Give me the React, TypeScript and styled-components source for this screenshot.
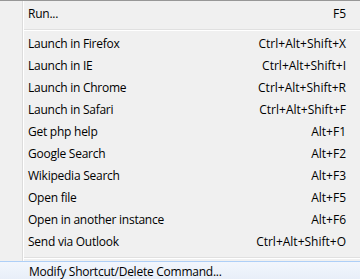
import React from 'react'
import styled, { createGlobalStyle } from 'styled-components'

const GlobalStyle = createGlobalStyle`
  html, body {
    margin: 0;
    padding: 0;
    background: #f0f0f0;
  }
  body {
    font-family: 'Open Sans', 'Noto Sans', sans-serif;
    font-size: 12px;
    color: #000;
  }
`

type Entry =
  | { kind: 'item'; label: string; shortcut?: string; highlighted?: boolean }
  | { kind: 'separator' }

const entries: Entry[] = [
  { kind: 'item', label: 'Run...', shortcut: 'F5' },
  { kind: 'separator' },
  { kind: 'item', label: 'Launch in Firefox', shortcut: 'Ctrl+Alt+Shift+X' },
  { kind: 'item', label: 'Launch in IE', shortcut: 'Ctrl+Alt+Shift+I' },
  { kind: 'item', label: 'Launch in Chrome', shortcut: 'Ctrl+Alt+Shift+R' },
  { kind: 'item', label: 'Launch in Safari', shortcut: 'Ctrl+Alt+Shift+F' },
  { kind: 'item', label: 'Get php help', shortcut: 'Alt+F1' },
  { kind: 'item', label: 'Google Search', shortcut: 'Alt+F2' },
  { kind: 'item', label: 'Wikipedia Search', shortcut: 'Alt+F3' },
  { kind: 'item', label: 'Open file', shortcut: 'Alt+F5' },
  { kind: 'item', label: 'Open in another instance', shortcut: 'Alt+F6' },
  { kind: 'item', label: 'Send via Outlook', shortcut: 'Ctrl+Alt+Shift+O' },
  { kind: 'separator' },
  { kind: 'item', label: 'Modify Shortcut/Delete Command...', highlighted: true }
]

const Menu = styled.div`
  position: relative;
  width: 360px;
  height: 279px;
  overflow: hidden;
  box-sizing: border-box;
  border-top: 1px solid #979797;
  padding-top: 2px;
  background: #f0f0f0;

  /* icon gutter edge */
  &::before {
    content: '';
    position: absolute;
    top: 0;
    bottom: 0;
    left: 22px;
    width: 1px;
    background: #dcdcdc;
    border-right: 1px solid #ffffff;
  }
`

const Row = styled.div<{ $highlighted?: boolean }>`
  position: relative;
  z-index: 1;
  display: flex;
  align-items: center;
  justify-content: space-between;
  height: 22px;
  box-sizing: border-box;
  padding: 0 14px 0 28px;
  line-height: 22px;
  white-space: nowrap;
  ${p =>
    p.$highlighted &&
    `
    margin: 0 -3px;
    padding-left: 31px;
    border: 1px solid #aecff7;
    border-radius: 3px;
    background: linear-gradient(#f2f6fc, #e6edf8);
  `}
`

const Label = styled.span`
  letter-spacing: -0.25px;
`

const Shortcut = styled.span`
  text-align: right;
`

const Separator = styled.div`
  position: relative;
  z-index: 1;
  margin: 4px 0 2px 24px;
  height: 1px;
  background: #e0e0e0;
  border-bottom: 1px solid #ffffff;
`

export default function App() {
  return (
    <>
      <GlobalStyle />
      <Menu>
        {entries.map((e, i) =>
          e.kind === 'separator' ? (
            <Separator key={i} />
          ) : (
            <Row key={i} $highlighted={e.highlighted}>
              <Label>{e.label}</Label>
              {e.shortcut && <Shortcut>{e.shortcut}</Shortcut>}
            </Row>
          )
        )}
      </Menu>
    </>
  )
}
